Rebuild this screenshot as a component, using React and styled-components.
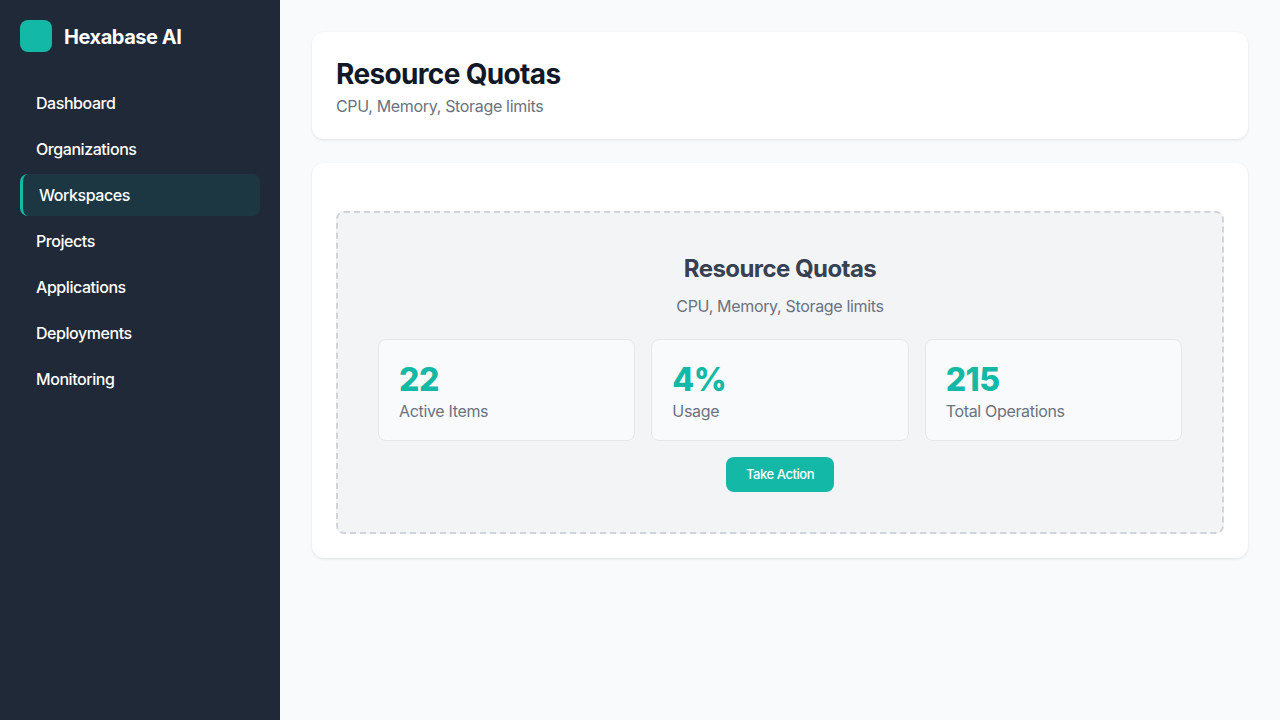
import React from 'react';
import styled, {createGlobalStyle} from 'styled-components';

const GlobalStyle = createGlobalStyle`
  html, body {
    margin: 0;
    padding: 0;
    background: #f9fafb;
    font-family: Inter, "Liberation Sans", sans-serif;
  }
  * {
    box-sizing: border-box;
  }
`;

const Layout = styled.div`
  display: flex;
  width: 100%;
  min-height: 720px;
`;

const Sidebar = styled.aside`
  width: 280px;
  flex-shrink: 0;
  padding: 20px;
  background: #1f2937;
  color: #ffffff;
`;

const Brand = styled.div`
  display: flex;
  align-items: center;
  gap: 12px;
  margin-bottom: 30px;
`;

const LogoMark = styled.div`
  width: 32px;
  height: 32px;
  border-radius: 8px;
  background: #14b8a6;
`;

const BrandName = styled.span`
  padding-top: 1px;
  font-size: 20px;
  font-weight: 700;
  letter-spacing: -0.45px;
  line-height: 30px;
`;

const Nav = styled.nav`
  display: flex;
  flex-direction: column;
  gap: 4px;
`;

const NavItem = styled.a`
  display: block;
  height: 42px;
  padding: 0 16px;
  border-radius: 8px;
  font-size: 16px;
  font-weight: 500;
  letter-spacing: -0.44px;
  line-height: 42px;
  color: #ffffff;
  background: ${props => props.$active ? 'rgba(20, 184, 166, 0.1)' : 'transparent'};
  border-left: ${props => props.$active ? '3px solid #14b8a6' : 'none'};
`;

const Main = styled.main`
  flex: 1;
  display: flex;
  flex-direction: column;
  gap: 24px;
  padding: 32px;
`;

const Card = styled.section`
  padding: 24px;
  border-radius: 12px;
  background: #ffffff;
  box-shadow: 0 1px 3px rgba(0, 0, 0, 0.1);
`;

const PageTitle = styled.h1`
  margin: 0 0 6px;
  font-size: 28px;
  font-weight: 700;
  letter-spacing: -0.65px;
  line-height: 37px;
  color: #111827;
`;

const Subtitle = styled.p`
  margin: 0;
  padding-bottom: 2px;
  font-size: 16px;
  letter-spacing: -0.33px;
  line-height: 14px;
  color: #6b7280;
`;

const Placeholder = styled.div`
  display: flex;
  flex-direction: column;
  align-items: center;
  margin-top: 24px;
  padding: 40px;
  border: 2px dashed #d1d5db;
  border-radius: 8px;
  background: #f3f4f6;
`;

const PanelTitle = styled.h2`
  margin: 0 0 15px;
  font-size: 24px;
  font-weight: 700;
  letter-spacing: -0.55px;
  line-height: 31px;
  color: #374151;
`;

const PanelText = styled.p`
  margin: 0 0 26px;
  font-size: 16px;
  letter-spacing: -0.33px;
  line-height: 14px;
  color: #6b7280;
`;

const StatGrid = styled.div`
  display: grid;
  grid-template-columns: repeat(3, 1fr);
  gap: 16px;
  width: 100%;
  margin-bottom: 16px;
`;

const StatCard = styled.div`
  height: 102px;
  padding: 21px 20px 0;
  border: 1px solid #e5e7eb;
  border-radius: 8px;
  background: #f9fafb;
`;

const StatValue = styled.div`
  font-size: 32px;
  font-weight: 800;
  letter-spacing: -0.5px;
  line-height: 38px;
  color: #14b8a6;
`;

const StatLabel = styled.div`
  font-size: 16px;
  letter-spacing: -0.33px;
  line-height: 24px;
  color: #6b7280;
`;

const ActionButton = styled.button`
  width: 108px;
  height: 35px;
  padding: 0 0 1px;
  border: none;
  border-radius: 8px;
  background: #14b8a6;
  color: #ffffff;
  font-family: inherit;
  font-size: 13px;
  font-weight: 500;
  letter-spacing: -0.45px;
`;

const navItems = ['Dashboard', 'Organizations', 'Workspaces', 'Projects', 'Applications', 'Deployments', 'Monitoring'];

const stats = [
  {value: '22', label: 'Active Items'},
  {value: '4%', label: 'Usage'},
  {value: '215', label: 'Total Operations'},
];

const App = () => {
  return (
    <Layout>
      <GlobalStyle />
      <Sidebar>
        <Brand>
          <LogoMark />
          <BrandName>Hexabase AI</BrandName>
        </Brand>
        <Nav>
          {navItems.map(item => (
            <NavItem key={item} $active={item === 'Workspaces'}>{item}</NavItem>
          ))}
        </Nav>
      </Sidebar>
      <Main>
        <Card>
          <PageTitle>Resource Quotas</PageTitle>
          <Subtitle>CPU, Memory, Storage limits</Subtitle>
        </Card>
        <Card>
          <Placeholder>
            <PanelTitle>Resource Quotas</PanelTitle>
            <PanelText>CPU, Memory, Storage limits</PanelText>
            <StatGrid>
              {stats.map(stat => (
                <StatCard key={stat.label}>
                  <StatValue>{stat.value}</StatValue>
                  <StatLabel>{stat.label}</StatLabel>
                </StatCard>
              ))}
            </StatGrid>
            <ActionButton>Take Action</ActionButton>
          </Placeholder>
        </Card>
      </Main>
    </Layout>
  );
};

export default App;
